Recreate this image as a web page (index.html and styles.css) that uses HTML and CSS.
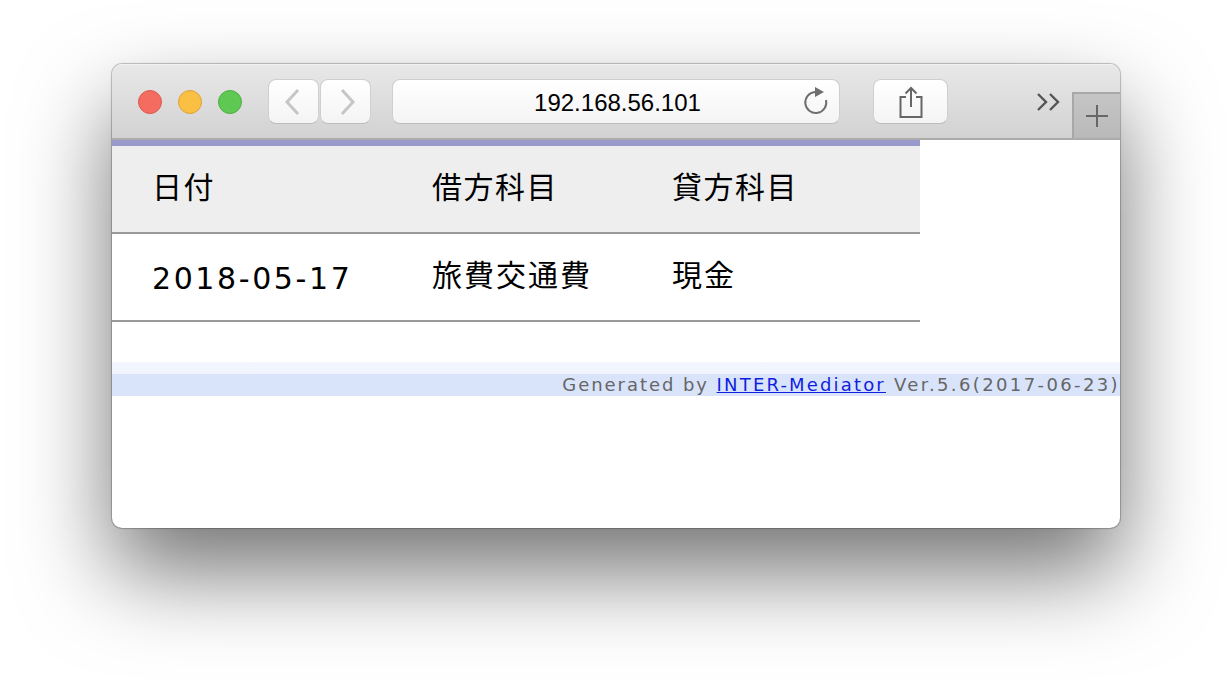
FILE: index.html
```html
<!DOCTYPE html>
<html lang="ja">
<head>
    <meta charset="UTF-8">
    <title>192.168.56.101</title>
    <link rel="stylesheet" href="styles.css">
</head>
<body>

    <div class="window">
        <!-- Browser toolbar -->
        <div class="toolbar">
            <div class="lights">
                <span class="light red"></span>
                <span class="light yellow"></span>
                <span class="light green"></span>
            </div>
            <div class="nav-buttons">
                <div class="tool-btn nav-btn">
                    <svg width="18" height="28" viewBox="0 0 18 28"><path d="M13 2 L2 14 L13 26" fill="none" stroke="#c6c6c6" stroke-width="3"/></svg>
                </div>
                <div class="tool-btn nav-btn">
                    <svg width="18" height="28" viewBox="0 0 18 28"><path d="M5 2 L16 14 L5 26" fill="none" stroke="#c6c6c6" stroke-width="3"/></svg>
                </div>
            </div>
            <div class="tool-btn address">
                <span class="address-text">192.168.56.101</span>
                <svg class="reload" width="26" height="30" viewBox="0 0 26 30"><path d="M12 6 A10.5 10.5 0 1 0 23 14" fill="none" stroke="#6f6f6f" stroke-width="2"/><path d="M12 1 L21 6 L12 11 Z" fill="#6f6f6f"/></svg>
            </div>
            <div class="tool-btn share">
                <svg width="24" height="32" viewBox="0 0 24 32"><path d="M7 11 H1.5 V31 H22.5 V11 H17" fill="none" stroke="#666" stroke-width="2"/><path d="M12 21 V2 M6.5 7.5 L12 2 L17.5 7.5" fill="none" stroke="#666" stroke-width="2"/></svg>
            </div>
            <svg class="overflow" width="24" height="18" viewBox="0 0 24 18"><path d="M2 1 L10 9 L2 17 M14 1 L22 9 L14 17" fill="none" stroke="#555" stroke-width="2.4"/></svg>
            <div class="new-tab">
                <svg width="24" height="24" viewBox="0 0 24 24"><path d="M12 1 V23 M1 12 H23" fill="none" stroke="#666" stroke-width="2"/></svg>
            </div>
        </div>

        <!-- Page content -->
        <div class="page">
            <table class="journal">
                <thead>
                    <tr>
                        <th class="col-date">日付</th>
                        <th class="col-debit">借方科目</th>
                        <th>貸方科目</th>
                    </tr>
                </thead>
                <tbody>
                    <tr>
                        <td class="date">2018-05-17</td>
                        <td>旅費交通費</td>
                        <td>現金</td>
                    </tr>
                </tbody>
            </table>

            <div class="footer">
                <div class="footer-text"><span class="generated">Generated by </span><a href="#">INTER-Mediator</a><span class="version"> Ver.5.6(2017-06-23)</span></div>
            </div>
        </div>
    </div>

</body>
</html>
```

FILE: styles.css
```css
* {
    margin: 0;
    padding: 0;
    box-sizing: border-box;
}

body {
    background-color: #fff;
    padding: 64px 112px 0;
    height: 688px;
    overflow: hidden;
    font-family: "DejaVu Sans", "Noto Sans CJK JP", sans-serif;
}

.window {
    width: 1008px;
    height: 464px;
    background-color: #fff;
    border-radius: 10px;
    overflow: hidden;
    box-shadow: 0 0 0 1px rgba(0, 0, 0, 0.12), 0 0 2px rgba(0, 0, 0, 0.4), 0 44px 90px rgba(0, 0, 0, 0.55);
}

/* Toolbar */
.toolbar {
    display: flex;
    align-items: center;
    height: 76px;
    padding-left: 26px;
    background: linear-gradient(#e9e8e9, #d3d2d3);
    border-top: 1px solid #f2f2f2;
    border-bottom: 2px solid #acabac;
}

.lights {
    display: flex;
    gap: 16px;
}

.light {
    width: 24px;
    height: 24px;
    border-radius: 50%;
}

.red {
    background-color: #f46c60;
    border: 1px solid #dc5a50;
}

.yellow {
    background-color: #fac043;
    border: 1px solid #dfa23a;
}

.green {
    background-color: #5fc853;
    border: 1px solid #4fae44;
}

.tool-btn {
    display: flex;
    align-items: center;
    justify-content: center;
    height: 45px;
    background: linear-gradient(#ffffff, #f4f4f4);
    border: 1px solid #d0cfd0;
    border-bottom-color: #bdbcbd;
    border-radius: 8px;
}

.nav-buttons {
    display: flex;
    gap: 1px;
    margin-left: 26px;
}

.nav-btn {
    width: 51px;
}

.address {
    position: relative;
    width: 448px;
    margin-left: 21px;
    padding: 2px 0 0 3px;
}

.address-text {
    font-family: "Liberation Sans", Arial, sans-serif;
    font-size: 24px;
    color: #000;
}

.reload {
    position: absolute;
    right: 10px;
    top: 6px;
}

.share {
    width: 75px;
    margin-left: 33px;
}

.overflow {
    margin-left: 88px;
}

.new-tab {
    display: flex;
    align-items: center;
    justify-content: center;
    align-self: flex-end;
    width: 48px;
    height: 46px;
    margin-left: 12px;
    background: linear-gradient(#c6c5c6, #bab9ba);
    border-top: 2px solid #a9a8a9;
    border-left: 2px solid #a9a8a9;
}

/* Page content */
.journal {
    width: 808px;
    border-collapse: collapse;
    table-layout: fixed;
    border-top: 6px solid #9999cc;
    color: #000;
    font-size: 30px;
}

.journal th,
.journal td {
    height: 88px;
    text-align: left;
    font-weight: normal;
    letter-spacing: 1.5px;
    border-bottom: 2px solid #999;
    padding-bottom: 8px;
}

.journal td {
    letter-spacing: 2px;
}

.journal th {
    height: 90px;
    background-color: #eeeeee;
}

.col-date {
    width: 320px;
}

.col-debit {
    width: 240px;
}

.journal th:first-child,
.journal td:first-child {
    padding-left: 40px;
}

.journal .date {
    padding-top: 2px;
    padding-bottom: 0;
    letter-spacing: 2.6px;
}

.footer {
    margin-top: 40px;
    padding-top: 12px;
    background: linear-gradient(#f3f6fe, #e9effd);
}

.footer-text {
    height: 22px;
    line-height: 22px;
    text-align: right;
    white-space: nowrap;
    font-size: 18px;
    letter-spacing: 2.17px;
    color: #666;
    background-color: #d9e4fb;
}

.footer-text a {
    color: #0f1fe0;
}

.generated {
    letter-spacing: 1.94px;
}

.version {
    letter-spacing: 2.38px;
}
```
